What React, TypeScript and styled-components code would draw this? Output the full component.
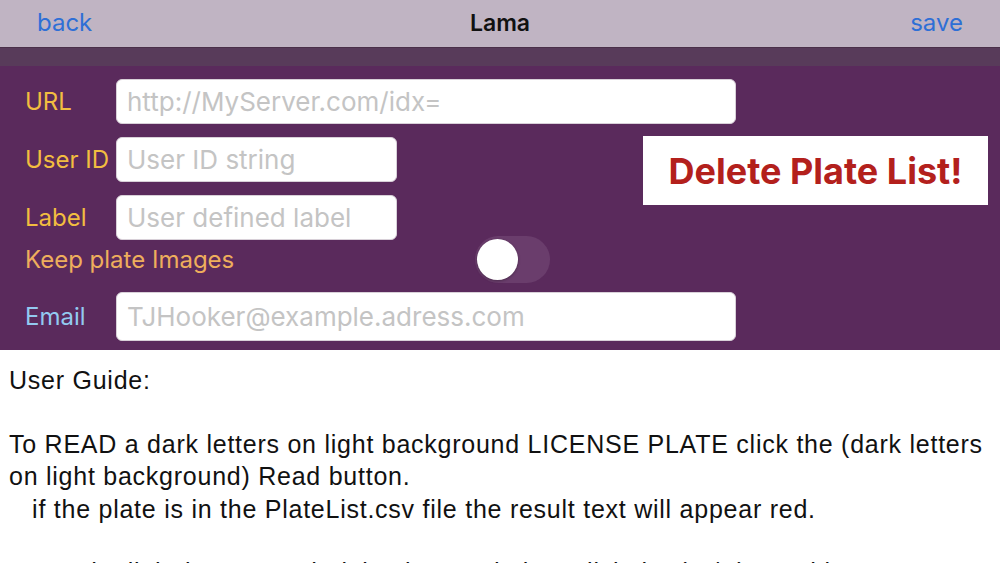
import React from "react";
import styled, { createGlobalStyle } from "styled-components";

const Global = createGlobalStyle`
  html, body { margin: 0; padding: 0; background: #ffffff; }
  body { width: 1000px; height: 563px; overflow: hidden; font-family: "Inter", "Liberation Sans", sans-serif; }
`;

const Screen = styled.div`
  width: 1000px;
  height: 563px;
  overflow: hidden;
  display: flex;
  flex-direction: column;
`;

const NavBar = styled.header`
  flex-shrink: 0;
  height: 47px;
  background: #c0b4c3;
  display: flex;
  align-items: center;
  justify-content: space-between;
  padding: 0 37px;
  border-bottom: 1px solid #4a3049;
  position: relative;
`;

const NavButton = styled.span`
  color: #2e6fd6;
  font-size: 24px;
  line-height: 1;
  padding-bottom: 2px;
`;

const NavTitle = styled.span`
  position: absolute;
  left: 0;
  right: 0;
  text-align: center;
  font-size: 23px;
  font-weight: 600;
  color: #111;
  pointer-events: none;
  padding-bottom: 2px;
`;

const Band = styled.div`
  flex-shrink: 0;
  height: 18px;
  background: #583b5a;
`;

const Panel = styled.section`
  flex-shrink: 0;
  background: #5a2a5c;
  height: 284px;
  padding: 13px 12px 0 25px;
  box-sizing: border-box;
  display: grid;
  grid-template-columns: 91px 1fr;
  grid-template-rows: 45px 45px 45px 26px 49px;
  row-gap: 13px;
  position: relative;
`;

const FieldLabel = styled.label<{ $color: string }>`
  color: ${(p) => p.$color};
  font-size: 24px;
  display: flex;
  align-items: center;
  white-space: nowrap;
`;

const Input = styled.div<{ $w: number }>`
  width: ${(p) => p.$w}px;
  height: 100%;
  box-sizing: border-box;
  background: #fff;
  border-radius: 6px;
  border: 1px solid #d8d0d8;
  color: #c4c4c4;
  font-size: 26px;
  display: flex;
  align-items: center;
  padding-left: 10px;
  white-space: nowrap;
  overflow: hidden;
`;

const ToggleRow = styled.div`
  grid-column: 1 / span 2;
  display: flex;
  align-items: flex-start;
  margin-top: -17px;
  height: 47px;
`;

const ToggleLabel = styled.span`
  color: #eeae5c;
  font-size: 24px;
  width: 450px;
  padding-top: 9px;
  white-space: nowrap;
`;

const Track = styled.div`
  width: 75px;
  height: 47px;
  border-radius: 24px;
  background: #6a3d6c;
  position: relative;
`;

const Knob = styled.div`
  position: absolute;
  left: 2px;
  top: 3px;
  width: 41px;
  height: 41px;
  border-radius: 50%;
  background: #fff;
  box-shadow: 0 1px 3px rgba(0, 0, 0, 0.3);
`;

const DeleteButton = styled.div`
  position: absolute;
  left: 643px;
  top: 70px;
  width: 345px;
  height: 69px;
  background: #fff;
  color: #b3201c;
  font-weight: 700;
  font-size: 36px;
  display: flex;
  align-items: center;
  justify-content: center;
`;

const Guide = styled.article`
  padding: 14px 8px 0 9px;
  font-family: "Liberation Sans", Arial, sans-serif;
  font-size: 25px;
  letter-spacing: 0.75px;
  line-height: 32.5px;
  color: #111;
`;

const Para = styled.p`
  margin: 0 0 31px 0;
  white-space: pre-wrap;
`;

export default function App() {
  return (
    <Screen>
      <Global />
      <NavBar>
        <NavButton>back</NavButton>
        <NavTitle>Lama</NavTitle>
        <NavButton>save</NavButton>
      </NavBar>
      <Band />
      <Panel>
        <FieldLabel $color="#f2bd40">URL</FieldLabel>
        <Input $w={620}>http://MyServer.com/idx=</Input>
        <FieldLabel $color="#f2bd40">User ID</FieldLabel>
        <Input $w={281}>User ID string</Input>
        <FieldLabel $color="#f2bd40">Label</FieldLabel>
        <Input $w={281}>User defined label</Input>
        <ToggleRow>
          <ToggleLabel>Keep plate Images</ToggleLabel>
          <Track>
            <Knob />
          </Track>
        </ToggleRow>
        <FieldLabel $color="#93c9f0">Email</FieldLabel>
        <Input $w={620}>TJHooker@example.adress.com</Input>
        <DeleteButton>Delete Plate List!</DeleteButton>
      </Panel>
      <Guide>
        <Para>User Guide:</Para>
        <Para>
          {"To READ a dark letters on light background LICENSE PLATE click the (dark letters on light background) Read button.\n   if the plate is in the PlateList.csv file the result text will appear red."}
        </Para>
        <Para>
          To read a light letters on dark background plate click the (W/B) Read button.
        </Para>
      </Guide>
    </Screen>
  );
}
